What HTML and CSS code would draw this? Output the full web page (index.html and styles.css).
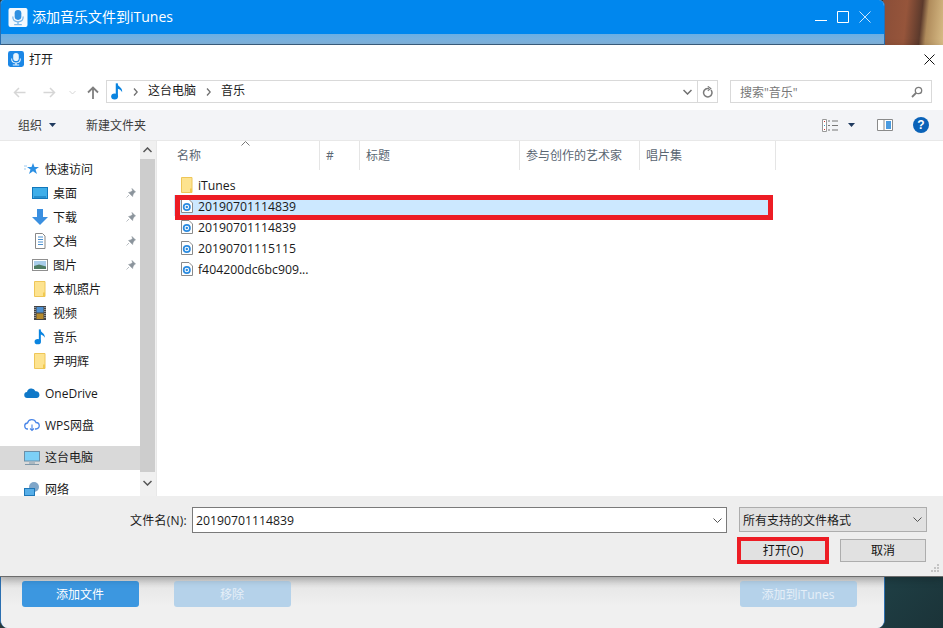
FILE: index.html
```html
<!DOCTYPE html>
<html lang="zh-CN">
<head>
<meta charset="utf-8">
<title>打开</title>
<link rel="stylesheet" href="styles.css">
</head>
<body>
<svg class="defs" width="0" height="0" aria-hidden="true">
  <defs>
    <symbol id="mic" viewBox="0 0 20 20"><rect width="20" height="20" rx="3" fill="#1b87e6"/><rect x="6.500" y="2.500" width="7" height="10" rx="3.500" fill="#e8f4fd"/><path d="M4.500 9.500c0 4 2.500 5.500 5.500 5.500s5.500-1.500 5.500-5.500" fill="none" stroke="#e8f4fd" stroke-width="1.300"/><path d="M10 15v2M6 17.500h8" stroke="#e8f4fd" stroke-width="1.500"/></symbol>
    <symbol id="mic-light" viewBox="0 0 20 20"><rect width="20" height="20" rx="2" fill="#f4f9fe"/><rect x="6.500" y="2" width="7" height="10.500" rx="3.500" fill="#2f8fe0"/><path d="M4.500 9c0 4 2.500 5.500 5.500 5.500s5.500-1.500 5.500-5.500" fill="none" stroke="#7db7e8" stroke-width="1.300"/><path d="M10 14.500v2.500M6 17.500h8" stroke="#7db7e8" stroke-width="1.500"/></symbol>
    <symbol id="note" viewBox="0 0 14 20"><path d="M6.800 .5v15" stroke="#0a84e0" stroke-width="2.500" fill="none"/><ellipse cx="4.200" cy="15.800" rx="4" ry="3.400" fill="#0a84e0"/><path d="M6.800 .5c.5 3.500 7 4.500 6.200 10.500-.8-2.500-3.500-4-6.200-4.500z" fill="#0a84e0"/></symbol>
    <symbol id="folder" viewBox="0 0 12 16"><path d="M.5.500h10.500v15H.5z" fill="#fde38f" stroke="#eec658"/><path d="M9 15.500v-4h2v4z" fill="#f1c94f"/></symbol>
    <symbol id="pin" viewBox="0 0 10 10"><path d="M6 .5l3.500 3.500-1.200.5-1.500 2.500-.2 1.500-4-4 1.500-.3 2.500-1.500zM3 7l-2.500 2.500" fill="#8b949c" stroke="#8b949c" stroke-width=".6"/></symbol>
    <symbol id="audio" viewBox="0 0 12 14"><path d="M.5.500h7.500l3.500 3.500v9.500H.5z" fill="#fff" stroke="#8a8a8a"/><circle cx="5.800" cy="8" r="4" fill="#2b8be0"/><circle cx="5.800" cy="8" r="2.300" fill="#fff"/><circle cx="5.800" cy="8" r="1.200" fill="#2b8be0"/></symbol>
    <symbol id="chev" viewBox="0 0 5 8"><path d="M1 .5L4.200 4 1 7.500" fill="none" stroke="#6f6f6f" stroke-width="1.300"/></symbol>
  </defs>
</svg>

<div class="app">
  <header class="app-title">
    <svg class="app-logo"><use href="#mic-light"/></svg>
    <span class="app-name">添加音乐文件到iTunes</span>
    <div class="win-btns">
      <svg width="12" height="12" viewBox="0 0 12 12"><path d="M0 9.500h12" stroke="#fff"/></svg>
      <svg width="12" height="12" viewBox="0 0 12 12"><path d="M.5.500h11v11H.5z" fill="none" stroke="#fff"/></svg>
      <svg width="12" height="12" viewBox="0 0 12 12"><path d="M.5.500l11 11M11.500.500l-11 11" stroke="#fff" stroke-width=".8"/></svg>
    </div>
  </header>
  <div class="app-strip"></div>
  <div class="app-spacer"></div>
  <footer class="app-actions">
    <button class="app-btn primary">添加文件</button>
    <button class="app-btn muted">移除</button>
    <span class="grow"></span>
    <button class="app-btn muted">添加到iTunes</button>
  </footer>
</div>

<main class="dialog">
  <div class="dlg-title">
    <svg class="dlg-logo"><use href="#mic"/></svg>
    <span class="dlg-name">打开</span>
    <svg class="dlg-close" width="11" height="11" viewBox="0 0 11 11"><path d="M.5.500l10 10M10.500.500l-10 10" stroke="#111" stroke-width="1"/></svg>
  </div>

  <div class="nav">
    <div class="nav-arrows">
      <svg class="arrow" width="13" height="11" viewBox="0 0 13 11"><path d="M12.500 5.500H1.500M6 1L1.500 5.500 6 10" fill="none" stroke="#d6d6d6" stroke-width="1.500"/></svg>
      <svg class="arrow second" width="13" height="11" viewBox="0 0 13 11"><path d="M.5 5.500h11M7 1l4.500 4.500L7 10" fill="none" stroke="#d6d6d6" stroke-width="1.500"/></svg>
      <svg class="arrow tiny" width="7" height="5" viewBox="0 0 7 5"><path d="M.5 1l3 3 3-3" fill="none" stroke="#d6d6d6"/></svg>
      <svg class="arrow up" width="12" height="13" viewBox="0 0 12 13"><path d="M6 13V1.500M1 6.500l5-5 5 5" fill="none" stroke="#7f7f7f" stroke-width="1.800"/></svg>
    </div>
    <div class="address">
      <svg class="addr-note"><use href="#note"/></svg>
      <svg class="chev"><use href="#chev"/></svg>
      <span class="crumb">这台电脑</span>
      <svg class="chev"><use href="#chev"/></svg>
      <span class="crumb">音乐</span>
      <span class="grow"></span>
      <svg class="addr-drop" width="9" height="6" viewBox="0 0 9 6"><path d="M.5 1l4 4 4-4" fill="none" stroke="#6f6f6f" stroke-width="1.500"/></svg>
      <span class="addr-refresh">
        <svg width="11" height="12" viewBox="0 0 11 12"><path d="M9 4A4.200 4.200 0 1 1 5.500 2.500H7" fill="none" stroke="#7c7c7c" stroke-width="1.500"/><path d="M5.800.3l3 2.200-3 2.200" fill="none" stroke="#7c7c7c" stroke-width="1.100"/></svg>
      </span>
    </div>
    <div class="search">
      <span class="search-text">搜索"音乐"</span>
      <svg width="12" height="12" viewBox="0 0 12 12"><circle cx="7.500" cy="4.500" r="3.200" fill="none" stroke="#7c7c7c" stroke-width="1.300"/><path d="M5 7L1 11" stroke="#7c7c7c" stroke-width="1.800"/></svg>
    </div>
  </div>

  <div class="toolbar">
    <span class="tool">组织</span>
    <svg class="caret" width="7" height="4" viewBox="0 0 7 4"><path d="M0 0h7L3.500 4z" fill="#1f3a5f"/></svg>
    <span class="tool new-folder">新建文件夹</span>
    <span class="grow"></span>
    <svg class="view-ico" width="16" height="13" viewBox="0 0 16 13"><path d="M.5.500h4v12h-4z" fill="#fff" stroke="#999"/><path d="M6 2h2M10 2h6M6 6.500h2M10 6.500h6M6 11h2M10 11h6" stroke="#777"/><path d="M2 2h1v1H2z" fill="#c33"/><path d="M2 6h1v1H2z" fill="#39c"/><path d="M2 10h1v1H2z" fill="#c33"/></svg>
    <svg class="caret view-caret" width="7" height="4" viewBox="0 0 7 4"><path d="M0 0h7L3.500 4z" fill="#1f3a5f"/></svg>
    <svg class="pane-ico" width="16" height="12" viewBox="0 0 16 12"><path d="M.5.500h15v11H.5z" fill="#fff" stroke="#8a8a8a"/><path d="M9 2h5v8H9z" fill="#4a9be0"/><path d="M7 1v10" stroke="#8a8a8a"/></svg>
    <span class="help">?</span>
  </div>

  <div class="browser">
    <nav class="side">
      <div class="tree">
        <div class="item group first"><svg class="ico-root" viewBox="0 0 16 14"><path d="M9 1l1.500 4H15l-3.500 2.600L13 12 9 9.300 5 12l1.500-4.400L3 5h4.500z" fill="#2b8fe3"/><path d="M0 4h3M0 7h2" stroke="#9cc9ee"/></svg><span class="lbl">快速访问</span></div>
        <div class="item sub"><svg class="ico" viewBox="0 0 16 14"><rect x=".5" y="1.500" width="15" height="11" fill="#3eaee9" stroke="#1277bb"/><path d="M2 11h12" stroke="#0f6fb0"/></svg><span class="lbl">桌面</span><svg class="pin"><use href="#pin"/></svg></div>
        <div class="item sub"><svg class="ico" viewBox="0 0 16 16"><path d="M5 0h6v8h5l-8 8-8-8h5z" fill="#3a8fe0"/></svg><span class="lbl">下载</span><svg class="pin"><use href="#pin"/></svg></div>
        <div class="item sub"><svg class="ico" viewBox="0 0 16 16"><path d="M3.500.500h7l2.500 2.500v12.500H3.500z" fill="#fff" stroke="#888"/><path d="M6 4h5M6 6.500h5M6 9h5M6 11.500h5" stroke="#4a90d0"/></svg><span class="lbl">文档</span><svg class="pin"><use href="#pin"/></svg></div>
        <div class="item sub"><svg class="ico" viewBox="0 0 16 14"><rect x=".5" y="1.500" width="15" height="11" fill="#fff" stroke="#8f8f8f"/><rect x="2" y="3" width="12" height="8" fill="#a9cdea"/><path d="M2 8l5-1.500 7 2V11H2z" fill="#4e7c63"/></svg><span class="lbl">图片</span><svg class="pin"><use href="#pin"/></svg></div>
        <div class="item sub"><svg class="ico folder"><use href="#folder"/></svg><span class="lbl">本机照片</span></div>
        <div class="item sub"><svg class="ico" viewBox="0 0 16 16"><rect x="2" y="1" width="12" height="14" fill="#444"/><rect x="4.500" y="2" width="7" height="5.500" fill="#4d8fd0"/><rect x="4.500" y="8.500" width="7" height="5.500" fill="#b58a2c"/><path d="M3 2v12M13 2v12" stroke="#ddd" stroke-dasharray="1 1"/></svg><span class="lbl">视频</span></div>
        <div class="item sub"><svg class="ico note"><use href="#note"/></svg><span class="lbl">音乐</span></div>
        <div class="item sub"><svg class="ico folder"><use href="#folder"/></svg><span class="lbl">尹明辉</span></div>
        <div class="item group gap-b"><svg class="ico-root" viewBox="0 0 16 11"><path d="M3.500 10.500a3 3 0 0 1-.500-6 4.500 4.500 0 0 1 8.500-.800 3.500 3.500 0 0 1 1.500 6.800z" fill="#0f78c8"/></svg><span class="lbl">OneDrive</span></div>
        <div class="item group gap-b"><svg class="ico-root" viewBox="0 0 16 13"><path d="M4 10.500a3 3 0 0 1-.500-6 4.500 4.500 0 0 1 8.500-.500 3.200 3.200 0 0 1 0 6.500h-1" fill="none" stroke="#4a86e8" stroke-width="1.300"/><path d="M8 6v6M6 10l2 2 2-2" fill="none" stroke="#4a86e8" stroke-width="1.100"/></svg><span class="lbl">WPS网盘</span></div>
        <div class="item group current"><svg class="ico-root" viewBox="0 0 16 14"><rect x=".5" y=".5" width="15" height="9.500" fill="#7cd0f7" stroke="#6b8fa8"/><path d="M5 12h6M1 13.500h14" stroke="#7f97a8"/></svg><span class="lbl">这台电脑</span></div>
        <div class="item group after-current"><svg class="ico-root" viewBox="0 0 16 14"><circle cx="10" cy="5" r="5" fill="#7fa6c9"/><rect x=".5" y="6.500" width="10" height="7" fill="#57aee8" stroke="#1d77b8"/></svg><span class="lbl">网络</span></div>
      </div>
      <div class="sidebar-scroll">
        <svg class="sb-arrow" width="9" height="6" viewBox="0 0 9 6"><path d="M.5 5l4-4 4 4" fill="none" stroke="#555" stroke-width="1.500"/></svg>
        <div class="thumb"></div>
        <svg class="sb-arrow" width="9" height="6" viewBox="0 0 9 6"><path d="M.5 1l4 4 4-4" fill="none" stroke="#555" stroke-width="1.500"/></svg>
      </div>
    </nav>

    <section class="files">
      <div class="cols">
        <svg class="sort" width="9" height="5" viewBox="0 0 9 5"><path d="M.5 4.500l4-4 4 4" fill="none" stroke="#777"/></svg>
        <span class="col c-name">名称</span>
        <span class="col c-num">#</span>
        <span class="col c-title">标题</span>
        <span class="col c-artist">参与创作的艺术家</span>
        <span class="col c-album">唱片集</span>
      </div>
      <ul class="rows">
        <li class="row"><svg class="f-ico folder"><use href="#folder"/></svg><span class="row-text">iTunes</span></li>
        <li class="row selected"><svg class="f-ico"><use href="#audio"/></svg><span class="row-text">20190701114839</span></li>
        <li class="row"><svg class="f-ico"><use href="#audio"/></svg><span class="row-text">20190701114839</span></li>
        <li class="row"><svg class="f-ico"><use href="#audio"/></svg><span class="row-text">20190701115115</span></li>
        <li class="row"><svg class="f-ico"><use href="#audio"/></svg><span class="row-text">f404200dc6bc909...</span></li>
      </ul>
      <div class="red-box row-mark"></div>
    </section>
  </div>

  <div class="bottom">
    <div class="line one">
      <span class="fn-label">文件名(N):</span>
      <div class="fn-input"><span class="fn-value">20190701114839</span><svg width="9" height="5" viewBox="0 0 9 5"><path d="M.5.500l4 4 4-4" fill="none" stroke="#555"/></svg></div>
      <div class="type-select"><span>所有支持的文件格式</span><svg width="9" height="5" viewBox="0 0 9 5"><path d="M.5.500l4 4 4-4" fill="none" stroke="#555"/></svg></div>
    </div>
    <div class="line two">
      <button class="dlg-btn open">打开(O)</button>
      <button class="dlg-btn cancel">取消</button>
    </div>
    <svg class="grip" width="8" height="8" viewBox="0 0 8 8"><path d="M6 0h2v2H6zM3 3h2v2H3zM6 3h2v2H6zM0 6h2v2H0zM3 6h2v2H3zM6 6h2v2H6z" fill="#c4c4c4"/></svg>
  </div>
</main>
</body>
</html>
```
FILE: styles.css
```css
* { box-sizing: border-box; }
html, body { margin: 0; height: 100%; }
body {
  width: 943px;
  height: 628px;
  overflow: hidden;
  position: relative;
  font-family: "Open Sans", "Noto Sans CJK SC", sans-serif;
  font-size: 12px;
  color: #1a1a1a;
  background:
    linear-gradient(96deg, #8a4e38 0, #96553b 38%, #5c3a2c 62%, #b08c5c 72%, #d8bc86 100%) right top / 60px 45px no-repeat,
    linear-gradient(135deg, #1f4046, #1b3338) right bottom / 60px 60px no-repeat,
    #2a3a3a;
}
.defs { position: absolute; }
.grow { flex: 1; }
button { font-family: inherit; }
ul { list-style: none; margin: 0; padding: 0; }

.app {
  position: absolute;
  left: 0; top: 0;
  width: 885px; height: 628px;
  border-radius: 4px 6px 8px 8px;
  background: #f0f0f0;
  border-left: 1px solid #2b6fb0;
  border-right: 1px solid #2b6fb0;
  overflow: hidden;
  display: flex;
  flex-direction: column;
}
.app-title { height: 34px; background: #0087ee; display: flex; align-items: center; padding-left: 7px; color: #fff; }
.app-logo { width: 20px; height: 19px; margin-top: 1px; }
.app-name { margin-left: 4px; font-size: 14px; line-height: 18px; margin-top: -1px; }
.win-btns { margin-left: auto; margin-right: 13px; display: flex; gap: 10px; }
.app-strip { height: 11px; background: linear-gradient(#6aaee4, #82b4dc); border-bottom: 1px solid #3c5f80; }
.app-spacer { flex: 1; }
.app-actions {
  height: 52px;
  padding: 5px 27px 0 21px;
  display: flex;
  gap: 35px;
  align-items: flex-start;
  background: linear-gradient(#cfcfcf, #e8e8e8 12px, #f0f0f0 30px);
}
.app-btn { width: 117px; height: 26px; border: 0; border-radius: 3px; color: #fff; font-size: 12px; padding: 0 1px 0 0; }
.app-btn.primary { background: #3c97e0; }
.app-btn.muted { background: #b5d2ea; color: #e5eff8; }

.dialog {
  position: absolute;
  left: 0; top: 45px;
  width: 943px; height: 531px;
  background: #fff;
  display: flex;
  flex-direction: column;
  box-shadow: 0 1px 0 #6c6c6c, 0 3px 8px rgba(0,0,0,.25);
}
.dlg-title { height: 28px; display: flex; align-items: center; padding-left: 8px; }
.dlg-logo { width: 16px; height: 16px; }
.dlg-name { margin-left: 5px; font-size: 12px; line-height: 16px; padding-top: 2px; }
.dlg-close { margin-left: auto; margin-right: 8px; }

.nav { height: 37px; display: flex; align-items: flex-start; padding-top: 7px; }
.nav-arrows { width: 106px; height: 24px; display: flex; align-items: center; padding-left: 13px; }
.arrow.second { margin-left: 17px; }
.arrow.tiny { margin-left: 13px; }
.arrow.up { margin-left: 11px; }
.address {
  width: 612px; height: 23px;
  border: 1px solid #d9d9d9;
  display: flex;
  align-items: center;
  padding-left: 4px;
}
.addr-note { width: 12px; height: 19px; flex: none; }
.chev { width: 5px; height: 8px; margin: 0 10px; flex: none; }
.crumb { font-size: 12px; line-height: 16px; padding-bottom: 2px; }
.addr-drop { margin-right: 5px; }
.addr-refresh {
  width: 20px; height: 21px;
  border-left: 1px solid #d9d9d9;
  display: flex; align-items: center; justify-content: center;
}
.search {
  width: 202px; height: 23px;
  margin-left: 12px;
  border: 1px solid #d9d9d9;
  display: flex;
  align-items: center;
  justify-content: space-between;
  padding: 0 8px 0 9px;
  color: #777;
}

.toolbar {
  height: 31px;
  background: #f3f4f7;
  border-bottom: 1px solid #e8e8e8;
  display: flex;
  align-items: center;
  padding: 0 14px 0 18px;
}
.tool { color: #3c3c3c; line-height: 16px; padding-top: 1px; }
.caret { margin-left: 7px; }
.new-folder { margin-left: 30px; }
.view-ico { margin-right: 10px; }
.view-caret { margin: 0 22px 0 0; }
.pane-ico { margin-right: 20px; }
.help {
  width: 16px; height: 16px; border-radius: 50%;
  background: #0a62b8; color: #fff;
  font: bold 12px/16px "Liberation Sans", sans-serif;
  text-align: center;
}

.browser { height: 355px; display: flex; }
.side { width: 157px; display: flex; border-right: 1px solid #e8e8e8; overflow: hidden; }
.tree { width: 140px; }
.item { height: 24px; display: flex; align-items: center; font-size: 12px; position: relative; }
.lbl { line-height: 16px; padding-top: 2px; }
.item.group { padding-left: 24px; }
.item.sub { padding-left: 32px; }
.item.first { margin-top: 16px; }
.gap-b { margin-top: 8px; }
.current { background: #d9d9d9; margin-top: 9px; }
.current .lbl { padding-top: 0; }
.after-current { margin-top: 7px; }
.ico-root { width: 16px; height: 14px; margin-right: 5px; flex: none; }
.ico { width: 16px; height: 16px; margin-right: 5px; flex: none; }
.pin { width: 10px; height: 10px; position: absolute; left: 126px; top: 7px; }
.sidebar-scroll { width: 16px; background: #f0f0f0; display: flex; flex-direction: column; align-items: center; padding-top: 6px; }
.sb-arrow { margin-right: 1px; }
.thumb { width: 15px; height: 313px; background: #cdcdcd; margin: 6px 0 8px; align-self: flex-start; }

.files { flex: 1; position: relative; padding-left: 8px; }
.cols { height: 29px; display: flex; align-items: center; position: relative; color: #5a6672; }
.sort { position: absolute; left: 76px; top: 0; }
.col { height: 29px; display: flex; align-items: center; padding-left: 6px; padding-bottom: 1px; border-right: 1px solid #e5e5e5; }
.c-name { width: 155px; padding-left: 12px; }
.c-num { width: 40px; }
.c-title { width: 160px; }
.c-artist { width: 120px; }
.c-album { width: 136px; }
.rows { margin-top: 4px; padding-left: 9px; width: 605px; }
.row { height: 21px; display: flex; align-items: center; padding-left: 7px; font-size: 12.25px; }
.row-text { line-height: 16px; padding-top: 2px; }
.row.selected { background: #cce8ff; }
.f-ico { width: 12px; height: 14px; margin-right: 5px; flex: none; }
.f-ico.folder { height: 16px; }
.red-box { position: absolute; border: 5px solid #ed1c24; }
.row-mark { left: 18px; top: 54px; width: 598px; height: 25px; }

.bottom { flex: 1; background: #eee; position: relative; padding: 11px 16px 0 0; }
.line { display: flex; align-items: center; justify-content: flex-end; }
.fn-label { margin-right: 5px; line-height: 16px; padding-top: 2px; letter-spacing: .25px; }
.fn-value { font-size: 12.25px; line-height: 16px; padding-top: 2px; }
.fn-input {
  width: 535px; height: 26px;
  border: 1px solid #7a7a7a;
  background: #fff;
  display: flex; align-items: center; justify-content: space-between;
  padding: 0 4px 0 3px;
}
.type-select {
  width: 188px; height: 25px;
  margin-left: 12px;
  border: 1px solid #adadad;
  background: #e1e1e1;
  display: flex; align-items: center; justify-content: space-between;
  padding: 0 4px 0 3px;
  align-self: flex-start;
}
.two { margin-top: 4px; padding-right: 1px; }
.dlg-btn { width: 86px; height: 23px; background: #e1e1e1; border: 1px solid #adadad; font-size: 12px; color: #111; padding: 0 0 1px; }
.dlg-btn.open { width: 92px; height: 27px; border: 4px solid #ed1c24; margin-right: 11px; }
.grip { position: absolute; right: 4px; bottom: 4px; }
```
